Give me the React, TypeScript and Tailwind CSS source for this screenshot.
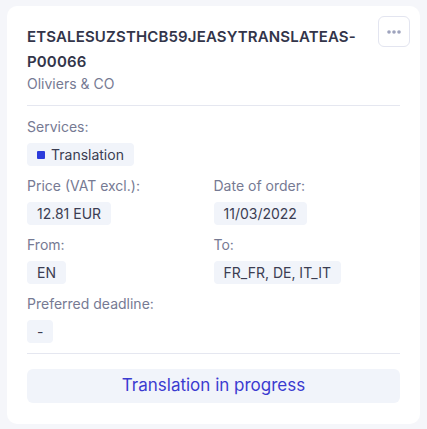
import React from "react";

const Field = ({ label, children }: { label: string; children: React.ReactNode }) => (
  <div className="flex flex-col">
    <span className="text-[14px] leading-[20px] text-[#767a93]">{label}</span>
    <div className="mt-[6px] flex">
      <span className="flex h-[23px] items-center gap-[6px] rounded-[4px] bg-[#f1f4fa] px-[10px] text-[14px] text-[#3b3d52]">
        {children}
      </span>
    </div>
  </div>
);

export default function App() {
  return (
    <div
      className="min-h-[429px] w-[427px] bg-[#f5f6fa] px-[7px] pt-[6px]"
      style={{ fontFamily: "Inter, 'Noto Sans', sans-serif" }}
    >
      <div className="flex flex-col rounded-[10px] bg-white px-[20px] pb-[21px] pt-[18px]">
        {/* header */}
        <div className="flex items-start justify-between gap-2">
          <div className="flex min-w-0 flex-col">
            <h2 className="break-words text-[15px] font-semibold leading-[25px] tracking-[0.15px] text-[#33354a]">
              ETSALESUZSTHCB59JEASYTRANSLATEAS-P00066
            </h2>
            <span className="text-[14px] leading-[20px] text-[#767a93]">Oliviers &amp; CO</span>
          </div>
          <button className="-mr-[10px] -mt-[8px] flex h-[31px] w-[32px] shrink-0 items-center justify-center rounded-[6px] border border-[#e3e5f0] bg-white">
            <svg width="14" height="4" viewBox="0 0 14 4">
              <circle cx="2" cy="2" r="1.8" fill="#9ea3bd" />
              <circle cx="7" cy="2" r="1.8" fill="#9ea3bd" />
              <circle cx="12" cy="2" r="1.8" fill="#9ea3bd" />
            </svg>
          </button>
        </div>

        <div className="mt-[11px] h-px bg-[#e5e7f0]" />

        <div className="mt-[11px] flex flex-col gap-[10px]">
          <Field label="Services:">
            <span className="h-[8px] w-[8px] rounded-[1px] bg-[#2b3bdb]" />
            Translation
          </Field>
          <div className="grid grid-cols-2">
            <Field label="Price (VAT excl.):">12.81 EUR</Field>
            <Field label="Date of order:">11/03/2022</Field>
          </div>
          <div className="grid grid-cols-2">
            <Field label="From:">EN</Field>
            <Field label="To:">FR_FR, DE, IT_IT</Field>
          </div>
          <Field label="Preferred deadline:">-</Field>
        </div>

        <div className="mt-[10px] h-px bg-[#e5e7f0]" />

        <button className="mt-[15px] flex h-[34px] items-center justify-center rounded-[6px] bg-[#f1f4fa] text-[17px] text-[#3b3bd0]">
          Translation in progress
        </button>
      </div>
    </div>
  );
}
